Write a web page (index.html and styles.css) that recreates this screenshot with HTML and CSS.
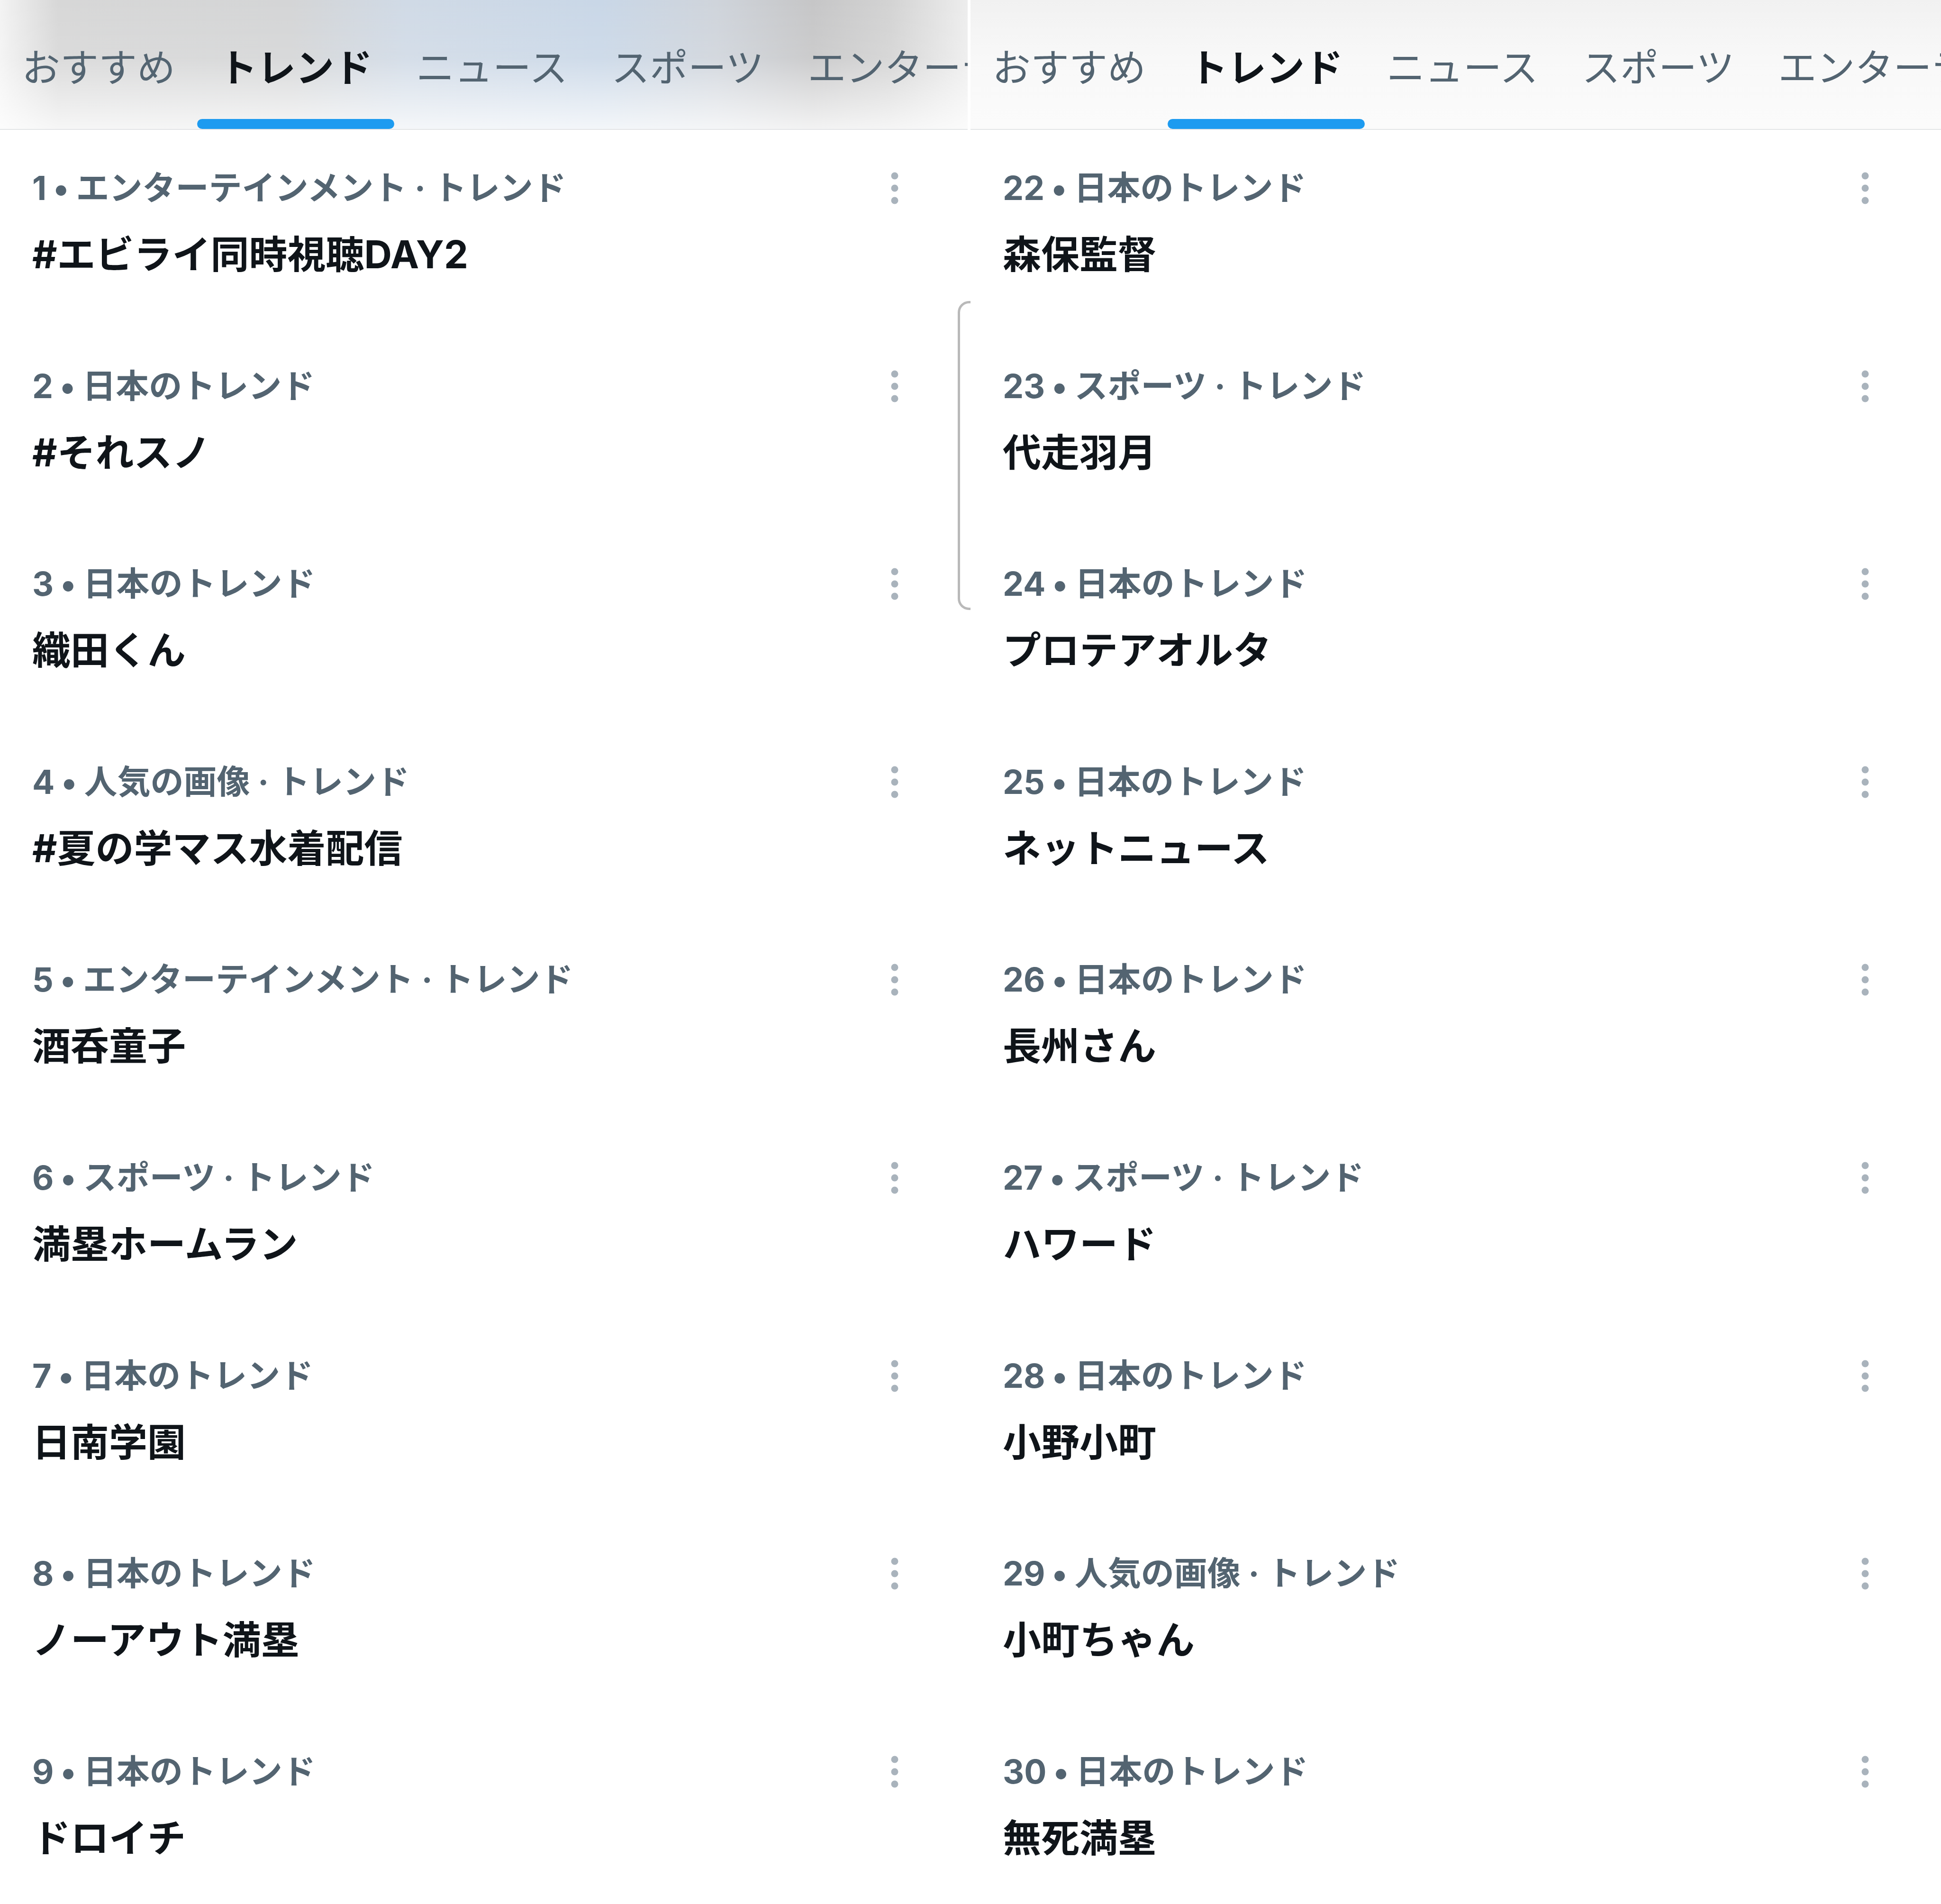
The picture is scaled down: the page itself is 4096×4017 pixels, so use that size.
FILE: index.html
```html
<!DOCTYPE html>
<html lang="ja">
  <head>
    <meta charset="UTF-8" />
    <meta name="viewport" content="width=device-width, initial-scale=1.0" />
    <title>トレンド</title>
    <link rel="stylesheet" href="styles.css">
  </head>
  <body>
    <div class="screens">
      <section class="screen">
        <nav class="tabs tabs-blur">
          <a class="tab">おすすめ</a>
          <a class="tab active">トレンド</a>
          <a class="tab">ニュース</a>
          <a class="tab">スポーツ</a>
          <a class="tab">エンターテイメント</a>
        </nav>
        <ul class="trends">
          <li class="trend">
            <div class="trend-head"><span class="trend-meta">1<span class="sep">•</span>エンターテインメント · トレンド</span><svg class="more" viewBox="0 0 20 72"><circle cx="10" cy="10" r="7.5"/><circle cx="10" cy="36" r="7.5"/><circle cx="10" cy="62" r="7.5"/></svg></div>
            <div class="trend-name">#エビライ同時視聴DAY2</div>
          </li>
          <li class="trend">
            <div class="trend-head"><span class="trend-meta">2<span class="sep">•</span>日本のトレンド</span><svg class="more" viewBox="0 0 20 72"><circle cx="10" cy="10" r="7.5"/><circle cx="10" cy="36" r="7.5"/><circle cx="10" cy="62" r="7.5"/></svg></div>
            <div class="trend-name">#それスノ</div>
          </li>
          <li class="trend">
            <div class="trend-head"><span class="trend-meta">3<span class="sep">•</span>日本のトレンド</span><svg class="more" viewBox="0 0 20 72"><circle cx="10" cy="10" r="7.5"/><circle cx="10" cy="36" r="7.5"/><circle cx="10" cy="62" r="7.5"/></svg></div>
            <div class="trend-name">織田くん</div>
          </li>
          <li class="trend">
            <div class="trend-head"><span class="trend-meta">4<span class="sep">•</span>人気の画像 · トレンド</span><svg class="more" viewBox="0 0 20 72"><circle cx="10" cy="10" r="7.5"/><circle cx="10" cy="36" r="7.5"/><circle cx="10" cy="62" r="7.5"/></svg></div>
            <div class="trend-name">#夏の学マス水着配信</div>
          </li>
          <li class="trend">
            <div class="trend-head"><span class="trend-meta">5<span class="sep">•</span>エンターテインメント · トレンド</span><svg class="more" viewBox="0 0 20 72"><circle cx="10" cy="10" r="7.5"/><circle cx="10" cy="36" r="7.5"/><circle cx="10" cy="62" r="7.5"/></svg></div>
            <div class="trend-name">酒呑童子</div>
          </li>
          <li class="trend">
            <div class="trend-head"><span class="trend-meta">6<span class="sep">•</span>スポーツ · トレンド</span><svg class="more" viewBox="0 0 20 72"><circle cx="10" cy="10" r="7.5"/><circle cx="10" cy="36" r="7.5"/><circle cx="10" cy="62" r="7.5"/></svg></div>
            <div class="trend-name">満塁ホームラン</div>
          </li>
          <li class="trend">
            <div class="trend-head"><span class="trend-meta">7<span class="sep">•</span>日本のトレンド</span><svg class="more" viewBox="0 0 20 72"><circle cx="10" cy="10" r="7.5"/><circle cx="10" cy="36" r="7.5"/><circle cx="10" cy="62" r="7.5"/></svg></div>
            <div class="trend-name">日南学園</div>
          </li>
          <li class="trend">
            <div class="trend-head"><span class="trend-meta">8<span class="sep">•</span>日本のトレンド</span><svg class="more" viewBox="0 0 20 72"><circle cx="10" cy="10" r="7.5"/><circle cx="10" cy="36" r="7.5"/><circle cx="10" cy="62" r="7.5"/></svg></div>
            <div class="trend-name">ノーアウト満塁</div>
          </li>
          <li class="trend">
            <div class="trend-head"><span class="trend-meta">9<span class="sep">•</span>日本のトレンド</span><svg class="more" viewBox="0 0 20 72"><circle cx="10" cy="10" r="7.5"/><circle cx="10" cy="36" r="7.5"/><circle cx="10" cy="62" r="7.5"/></svg></div>
            <div class="trend-name">ドロイチ</div>
          </li>
        </ul>
        <div class="scroll-bracket"></div>
      </section>

      <section class="screen">
        <nav class="tabs">
          <a class="tab">おすすめ</a>
          <a class="tab active">トレンド</a>
          <a class="tab">ニュース</a>
          <a class="tab">スポーツ</a>
          <a class="tab">エンターテイメント</a>
        </nav>
        <ul class="trends">
          <li class="trend">
            <div class="trend-head"><span class="trend-meta">22<span class="sep">•</span>日本のトレンド</span><svg class="more" viewBox="0 0 20 72"><circle cx="10" cy="10" r="7.5"/><circle cx="10" cy="36" r="7.5"/><circle cx="10" cy="62" r="7.5"/></svg></div>
            <div class="trend-name">森保監督</div>
          </li>
          <li class="trend">
            <div class="trend-head"><span class="trend-meta">23<span class="sep">•</span>スポーツ · トレンド</span><svg class="more" viewBox="0 0 20 72"><circle cx="10" cy="10" r="7.5"/><circle cx="10" cy="36" r="7.5"/><circle cx="10" cy="62" r="7.5"/></svg></div>
            <div class="trend-name">代走羽月</div>
          </li>
          <li class="trend">
            <div class="trend-head"><span class="trend-meta">24<span class="sep">•</span>日本のトレンド</span><svg class="more" viewBox="0 0 20 72"><circle cx="10" cy="10" r="7.5"/><circle cx="10" cy="36" r="7.5"/><circle cx="10" cy="62" r="7.5"/></svg></div>
            <div class="trend-name">プロテアオルタ</div>
          </li>
          <li class="trend">
            <div class="trend-head"><span class="trend-meta">25<span class="sep">•</span>日本のトレンド</span><svg class="more" viewBox="0 0 20 72"><circle cx="10" cy="10" r="7.5"/><circle cx="10" cy="36" r="7.5"/><circle cx="10" cy="62" r="7.5"/></svg></div>
            <div class="trend-name">ネットニュース</div>
          </li>
          <li class="trend">
            <div class="trend-head"><span class="trend-meta">26<span class="sep">•</span>日本のトレンド</span><svg class="more" viewBox="0 0 20 72"><circle cx="10" cy="10" r="7.5"/><circle cx="10" cy="36" r="7.5"/><circle cx="10" cy="62" r="7.5"/></svg></div>
            <div class="trend-name">長州さん</div>
          </li>
          <li class="trend">
            <div class="trend-head"><span class="trend-meta">27<span class="sep">•</span>スポーツ · トレンド</span><svg class="more" viewBox="0 0 20 72"><circle cx="10" cy="10" r="7.5"/><circle cx="10" cy="36" r="7.5"/><circle cx="10" cy="62" r="7.5"/></svg></div>
            <div class="trend-name">ハワード</div>
          </li>
          <li class="trend">
            <div class="trend-head"><span class="trend-meta">28<span class="sep">•</span>日本のトレンド</span><svg class="more" viewBox="0 0 20 72"><circle cx="10" cy="10" r="7.5"/><circle cx="10" cy="36" r="7.5"/><circle cx="10" cy="62" r="7.5"/></svg></div>
            <div class="trend-name">小野小町</div>
          </li>
          <li class="trend">
            <div class="trend-head"><span class="trend-meta">29<span class="sep">•</span>人気の画像 · トレンド</span><svg class="more" viewBox="0 0 20 72"><circle cx="10" cy="10" r="7.5"/><circle cx="10" cy="36" r="7.5"/><circle cx="10" cy="62" r="7.5"/></svg></div>
            <div class="trend-name">小町ちゃん</div>
          </li>
          <li class="trend">
            <div class="trend-head"><span class="trend-meta">30<span class="sep">•</span>日本のトレンド</span><svg class="more" viewBox="0 0 20 72"><circle cx="10" cy="10" r="7.5"/><circle cx="10" cy="36" r="7.5"/><circle cx="10" cy="62" r="7.5"/></svg></div>
            <div class="trend-name">無死満塁</div>
          </li>
        </ul>
      </section>
    </div>
  </body>
</html>
```

FILE: styles.css
```css
body {
  margin: 0;
  background: #ffffff;
  font-family: Inter, "Noto Sans CJK JP", sans-serif;
}
.screens {
  display: flex;
  width: 4096px;
  height: 4017px;
  overflow: hidden;
}
.screen {
  position: relative;
  width: 2048px;
  flex: none;
  overflow: hidden;
  background: #ffffff;
}

/* top tab bar */
.tabs {
  display: flex;
  height: 272px;
  border-bottom: 2px solid #e3e5e7;
  white-space: nowrap;
  overflow: hidden;
  background: linear-gradient(to bottom, #f1f1f1 0%, #f8f8f8 45%, #fbfbfb 100%);
}
.tabs-blur {
  margin-right: 6px;
  background:
    linear-gradient(to bottom, rgba(255, 255, 255, 0) 0%, rgba(255, 255, 255, 0.1) 45%, rgba(255, 255, 255, 0.78) 100%),
    linear-gradient(to right, #f3f3f3 0%, #d7d7d7 6%, #d4d5d6 30%, #d0dae6 42%, #c9d7e7 62%, #cfd4db 74%, #c6c6c7 84%, #d3d3d3 92%, #ededed 100%);
}
.tab {
  position: relative;
  display: flex;
  align-items: center;
  flex: none;
  padding: 0 46px;
  font-size: 81px;
  color: #536471;
}
.tab.active {
  font-weight: 700;
  color: #0f1419;
}
.tab.active::after {
  content: "";
  position: absolute;
  left: 0;
  right: 0;
  bottom: 0;
  height: 21px;
  border-radius: 11px;
  background: #1d9bf0;
}

/* trend list */
.trends {
  list-style: none;
  margin: 0;
  padding: 0;
}
.trend {
  box-sizing: border-box;
  height: 417.6px;
  padding: 78px 0 0 68px;
}
.trend-head {
  display: flex;
  align-items: center;
  height: 90px;
}
.trend-meta {
  flex: 1;
  font-size: 70px;
  line-height: 90px;
  font-weight: 700;
  color: #536471;
}
.sep {
  margin: 0 15px 0 14px;
}
.more {
  width: 20px;
  height: 72px;
  margin-right: 150px;
  fill: #a9b3bc;
}
.trend-name {
  margin-top: 45px;
  font-size: 81px;
  line-height: 100px;
  font-weight: 700;
  color: #0f1419;
}

/* rounded edge marker between the two captures */
.scroll-bracket {
  position: absolute;
  right: 0;
  top: 635px;
  width: 22px;
  height: 642px;
  border: 5px solid #b9b9b9;
  border-right: none;
  border-radius: 24px 0 0 24px;
}
```
